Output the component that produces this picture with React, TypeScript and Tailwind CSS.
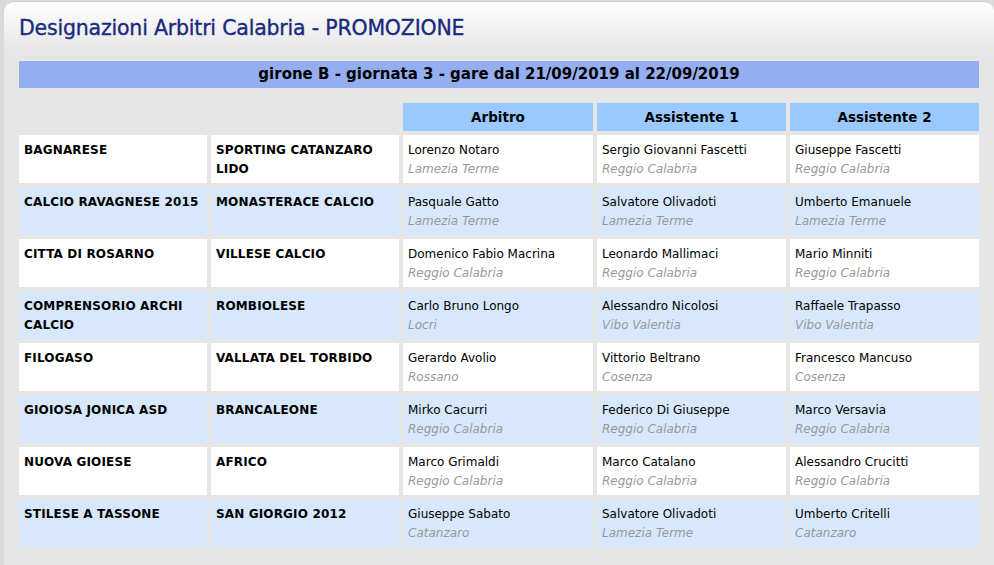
import React from "react";

type Row = {
  home: string;
  away: string;
  refs: [string, string][];
};

const rows: Row[] = [
  { home: "BAGNARESE", away: "SPORTING CATANZARO LIDO", refs: [["Lorenzo Notaro", "Lamezia Terme"], ["Sergio Giovanni Fascetti", "Reggio Calabria"], ["Giuseppe Fascetti", "Reggio Calabria"]] },
  { home: "CALCIO RAVAGNESE 2015", away: "MONASTERACE CALCIO", refs: [["Pasquale Gatto", "Lamezia Terme"], ["Salvatore Olivadoti", "Lamezia Terme"], ["Umberto Emanuele", "Lamezia Terme"]] },
  { home: "CITTA DI ROSARNO", away: "VILLESE CALCIO", refs: [["Domenico Fabio Macrina", "Reggio Calabria"], ["Leonardo Mallimaci", "Reggio Calabria"], ["Mario Minniti", "Reggio Calabria"]] },
  { home: "COMPRENSORIO ARCHI CALCIO", away: "ROMBIOLESE", refs: [["Carlo Bruno Longo", "Locri"], ["Alessandro Nicolosi", "Vibo Valentia"], ["Raffaele Trapasso", "Vibo Valentia"]] },
  { home: "FILOGASO", away: "VALLATA DEL TORBIDO", refs: [["Gerardo Avolio", "Rossano"], ["Vittorio Beltrano", "Cosenza"], ["Francesco Mancuso", "Cosenza"]] },
  { home: "GIOIOSA JONICA ASD", away: "BRANCALEONE", refs: [["Mirko Cacurri", "Reggio Calabria"], ["Federico Di Giuseppe", "Reggio Calabria"], ["Marco Versavia", "Reggio Calabria"]] },
  { home: "NUOVA GIOIESE", away: "AFRICO", refs: [["Marco Grimaldi", "Reggio Calabria"], ["Marco Catalano", "Reggio Calabria"], ["Alessandro Crucitti", "Reggio Calabria"]] },
  { home: "STILESE A TASSONE", away: "SAN GIORGIO 2012", refs: [["Giuseppe Sabato", "Catanzaro"], ["Salvatore Olivadoti", "Lamezia Terme"], ["Umberto Critelli", "Catanzaro"]] },
];

export default function App() {
  return (
    <div className="h-[565px] w-[994px] overflow-hidden bg-[#dadada] pl-[4px] pt-[1px]" style={{ fontFamily: '"DejaVu Sans", Verdana, sans-serif' }}>
      <div className="h-[564px] rounded-tl-[10px] rounded-tr-[10px] border-t border-[#d0d0d0] bg-[linear-gradient(to_bottom,#ffffff_0px,#e6e6e6_50px,#e6e6e6_100%)] pl-[15px] pr-[15px]">
        <h1 className="pt-[12px] text-[20.5px] leading-[28px] text-[#1a2a7c] tracking-[-0.2px] [-webkit-text-stroke:0.35px_#1a2a7c]">
          Designazioni Arbitri Calabria - PROMOZIONE
        </h1>
        <div className="mt-[19px] flex h-[27px] items-center justify-center bg-[#95aef0] text-[15px] font-bold text-black">
          girone B - giornata 3 - gare dal 21/09/2019 al 22/09/2019
        </div>
        <div className="mt-[15px] grid grid-cols-[188px_188px_190px_189px_189px] gap-[4px] text-[12px] leading-[19px]">
          <div />
          <div />
          {["Arbitro", "Assistente 1", "Assistente 2"].map((h) => (
            <div key={h} className="flex h-[28px] items-center justify-center bg-[#99c9ff] text-[13.5px] font-bold text-black">
              {h}
            </div>
          ))}
          {rows.map((r, i) => {
            const bg = i % 2 === 0 ? "bg-white" : "bg-[#d7e8fc]";
            return (
              <React.Fragment key={i}>
                <div className={`${bg} h-[48px] px-[5px] pt-[6px] font-bold text-black tracking-[0.15px]`}>{r.home}</div>
                <div className={`${bg} h-[48px] px-[5px] pt-[6px] font-bold text-black tracking-[0.15px]`}>{r.away}</div>
                {r.refs.map(([n, c], j) => (
                  <div key={j} className={`${bg} h-[48px] px-[5px] pt-[6px]`}>
                    <div className="text-black">{n}</div>
                    <div className="italic text-[#999]">{c}</div>
                  </div>
                ))}
              </React.Fragment>
            );
          })}
        </div>
      </div>
    </div>
  );
}
